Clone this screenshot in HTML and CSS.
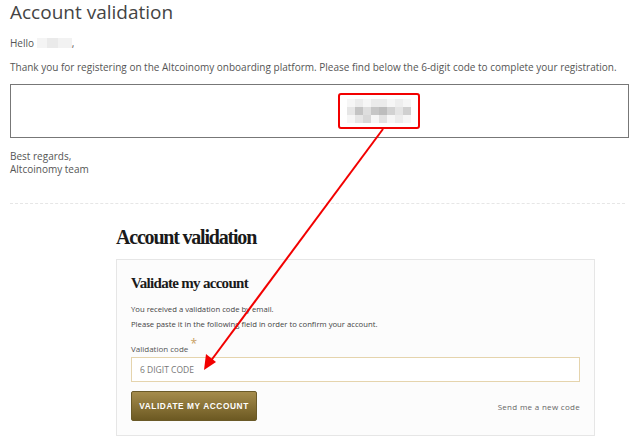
FILE: index.html
```html
<!DOCTYPE html>
<html lang="en">
  <head>
    <meta charset="UTF-8" />
    <meta name="viewport" content="width=device-width, initial-scale=1.0" />
    <title>Account validation</title>
    <link rel="stylesheet" href="styles.css">
  </head>
  <body>
    <div class="email">
      <h1 class="email-title">Account validation</h1>
      <p class="email-line">Hello <span class="masked-name"></span>,</p>
      <p class="email-line">Thank you for registering on the Altcoinomy onboarding platform. Please find below the 6-digit code to complete your registration.</p>
      <div class="code-box">
        <div class="code-mark">
          <svg class="code-pixels" width="64" height="24" viewBox="0 0 8 3" shape-rendering="crispEdges">
            <rect x="0" y="0" width="8" height="3" fill="#f6f6f6"/>
            <rect x="1" y="0" width="1" height="1" fill="#ececec"/>
            <rect x="3" y="0" width="2" height="1" fill="#ebebeb"/>
            <rect x="6" y="0" width="1" height="1" fill="#eeeeee"/>
            <rect x="0" y="1" width="1" height="1" fill="#e6e6e6"/>
            <rect x="1" y="1" width="1" height="1" fill="#c4c4c4"/>
            <rect x="2" y="1" width="1" height="1" fill="#dedede"/>
            <rect x="3" y="1" width="1" height="1" fill="#c6c6c6"/>
            <rect x="4" y="1" width="1" height="1" fill="#bdbdbd"/>
            <rect x="5" y="1" width="1" height="1" fill="#d2d2d2"/>
            <rect x="6" y="1" width="1" height="1" fill="#e4e4e4"/>
            <rect x="7" y="1" width="1" height="1" fill="#d0d0d0"/>
            <rect x="1" y="2" width="1" height="1" fill="#e6e6e6"/>
            <rect x="2" y="2" width="1" height="1" fill="#d8d8d8"/>
            <rect x="4" y="2" width="1" height="1" fill="#e2e2e2"/>
            <rect x="6" y="2" width="1" height="1" fill="#ececec"/>
          </svg>
        </div>
      </div>
      <p class="email-sign">Best regards,<br>Altcoinomy team</p>
    </div>

    <hr class="divider">

    <section class="validation">
      <h2 class="validation-title">Account validation</h2>
      <div class="card">
        <h3 class="card-title">Validate my account</h3>
        <p class="card-text">You received a validation code by email.</p>
        <p class="card-text">Please paste it in the following field in order to confirm your account.</p>
        <label class="field-label" for="code">Validation code <span class="required">*</span></label>
        <input class="field-input" id="code" type="text" placeholder="6 DIGIT CODE">
        <div class="card-actions">
          <button class="btn-validate" type="button">VALIDATE MY ACCOUNT</button>
          <a class="resend-link" href="#">Send me a new code</a>
        </div>
      </div>
    </section>

    <!-- pointer from the mailed code to the input field -->
    <svg class="pointer" width="640" height="444" viewBox="0 0 640 444">
      <line x1="383" y1="129" x2="210" y2="362" stroke="#f20000" stroke-width="2"/>
      <polygon points="204,370 206,354 216,362" fill="#f20000"/>
    </svg>
  </body>
</html>
```

FILE: styles.css
```css
* {
  margin: 0;
  padding: 0;
  box-sizing: border-box;
}

body {
  position: relative;
  background: #fff;
  font-family: "Open Sans", sans-serif;
  color: #555;
  padding: 0 11px 0 10px;
}

/* mail part */
.email-title {
  font-size: 19px;
  font-weight: 400;
  line-height: 24px;
  color: #444;
}

.email-line {
  font-size: 10px;
  line-height: 14px;
  margin-top: 10px;
}

.email-title + .email-line {
  margin-top: 12px;
}

.masked-name {
  display: inline-block;
  width: 35px;
  height: 10px;
  vertical-align: -1px;
  background: linear-gradient(90deg, #f4f4f4 0 30%, #eaeaea 30% 60%, #f2f2f2 60%);
}

.code-box {
  margin-top: 10px;
  height: 54px;
  border: 1px solid #777;
  display: flex;
  justify-content: center;
  align-items: center;
  padding-left: 118px;
}

.code-mark {
  width: 82px;
  height: 36px;
  border: 2px solid #f20000;
  border-radius: 3px;
  display: flex;
  justify-content: center;
  align-items: center;
}

.code-pixels {
  display: block;
}

.email-sign {
  font-size: 10px;
  line-height: 13px;
  margin-top: 12px;
}

.divider {
  border: 0;
  border-top: 1px dashed #e6e6e6;
  margin: 27px 4px 0 0;
}

/* validation form */
.validation {
  padding: 0 34px 0 106px;
}

.validation-title {
  font-family: "Liberation Serif", serif;
  font-weight: 700;
  font-size: 20px;
  letter-spacing: -1.2px;
  line-height: 24px;
  color: #1a1a1a;
  margin-top: 21px;
}

.card {
  margin-top: 10px;
  border: 1px solid #e6e6e6;
  background: #fcfcfc;
  padding: 13px 14px 14px 14px;
}

.card-title {
  font-family: "Liberation Serif", serif;
  font-weight: 700;
  font-size: 15px;
  letter-spacing: -0.7px;
  line-height: 20px;
  color: #1a1a1a;
  margin-bottom: 9px;
}

.card-text {
  font-size: 7.7px;
  line-height: 15px;
  color: #444;
}

.field-label {
  display: block;
  font-size: 8px;
  line-height: 12px;
  color: #555;
  margin-top: 11px;
}

.required {
  color: #c9a062;
  font-size: 12px;
  line-height: 0;
  vertical-align: 4px;
}

.field-input {
  display: block;
  width: 100%;
  height: 25px;
  margin-top: 2px;
  border: 1px solid #e5d4ad;
  background: #fff;
  padding: 0 8px;
  font-family: "Open Sans", sans-serif;
  font-size: 8.5px;
  color: #555;
}

.field-input::placeholder {
  color: #777;
}

.card-actions {
  display: flex;
  justify-content: space-between;
  align-items: center;
  margin-top: 9px;
}

.btn-validate {
  width: 126px;
  height: 30px;
  border: 1px solid #6a5a28;
  border-radius: 2px;
  background: linear-gradient(#a58c4c, #6c5922);
  color: #fff;
  font-family: "Liberation Sans", sans-serif;
  font-weight: 700;
  font-size: 8.3px;
  letter-spacing: 0.6px;
}

.resend-link {
  font-size: 8px;
  letter-spacing: 0.3px;
  color: #666;
  text-decoration: none;
  margin-top: 1px;
}

.pointer {
  position: absolute;
  top: 0;
  left: 0;
  pointer-events: none;
}
```
